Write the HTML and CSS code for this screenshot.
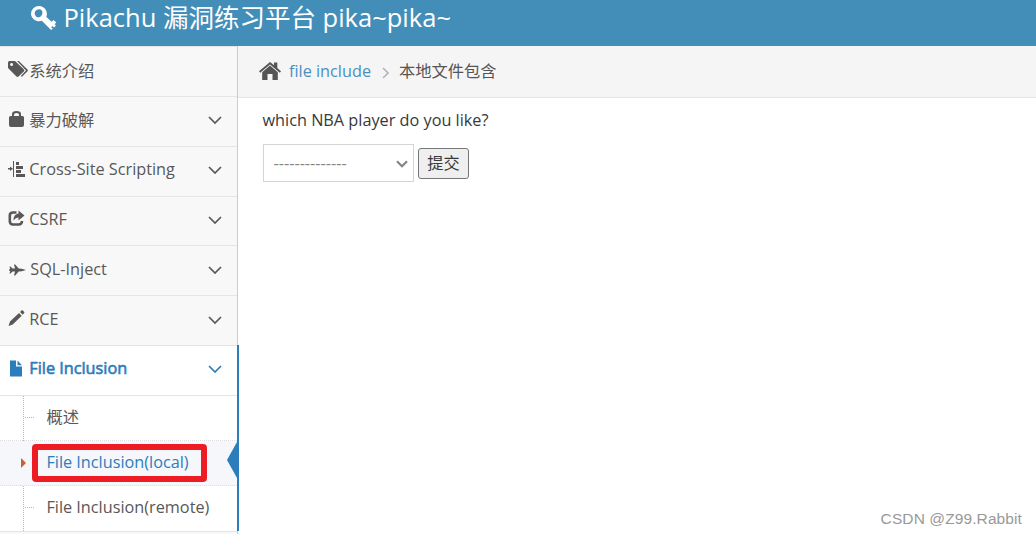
FILE: index.html
```html
<!DOCTYPE html>
<html lang="zh">
<head>
    <meta charset="UTF-8">
    <title>Get the pikachu</title>
    <link rel="stylesheet" href="styles.css">
</head>
<body>
    <header class="navbar">
        <svg class="key" viewBox="0 0 26 24"><path fill-rule="evenodd" d="M8 0a8 8 0 0 1 7.300 11l9.700 8.500-2 2-1.800-1.500-1 1.300 1.600 1.500-1.700 1.200L10.800 14.700A8 7.500 0 0 1 0 8 8 8 0 0 1 8 0zM8.500 3.200C5 3 3 6 4 8.700c1 3 5 3.500 6.500.8C12.300 7 11.500 3.500 8.500 3.200z"/><path d="M19 17.500l3.500-3.500 2.800 2.500-3.300 3.500z"/></svg>
        <span>Pikachu 漏洞练习平台 pika~pika~</span>
    </header>

    <div class="main">
        <nav class="sidebar">
            <ul class="nav-list">
                <li><a href="#">
                    <svg class="icon tags" viewBox="0 0 20 17"><path fill-rule="evenodd" d="M0 1.500Q0 0 1.500 0H7l9 8.500q.8 1-.2 2L10.500 15.500q-1 .8-2 0L0 7zM3.500 2a1.500 1.500 0 1 0 .1 3 1.500 1.500 0 0 0-.1-3z"/><path d="M9 0h1.800l8.700 8.500q.8 1-.2 2L14 15.800l-1.200-.8 5.200-5.500z"/></svg><span>系统介绍</span>
                </a></li>
                <li><a href="#">
                    <svg class="icon" viewBox="0 0 16 17"><path fill-rule="evenodd" d="M3.500 5V3Q3.500 0 8 0t4.500 3v2H14q1.500 0 1.500 1.500V14q0 2-2 2h-11q-2 0-2-2V6.500Q.5 5 2 5zm2 0h5V3.500Q10.500 2 8 2T5.500 3.500z"/></svg><span>暴力破解</span>
                    <svg class="arrow" viewBox="0 0 14 8"><path d="M1 1l6 6 6-6"/></svg>
                </a></li>
                <li><a href="#">
                    <svg class="icon" viewBox="0 0 17 17"><path d="M0 7h2V5.500L5 7.700 2 10V8.400H0zM5 0h1v16H5zM8 1h3v3H8zM8 5h7v3H8zM8 9h5v3H8zM8 13h9v3H8z"/></svg><span>Cross-Site Scripting</span>
                    <svg class="arrow" viewBox="0 0 14 8"><path d="M1 1l6 6 6-6"/></svg>
                </a></li>
                <li><a href="#">
                    <svg class="icon" viewBox="0 0 17 17"><path d="M8.500 2.500H5Q1.800 2.500 1.800 5.500v5.500Q1.800 14.500 5 14.500h5.500q3.500 0 3.500-3.500" fill="none" stroke="currentColor" stroke-width="2.600"/><path d="M10.500.5l6 5-6 5V7.500Q7.500 7.500 5.500 10.500 5.500 4 10.500 3.500z"/></svg><span>CSRF</span>
                    <svg class="arrow" viewBox="0 0 14 8"><path d="M1 1l6 6 6-6"/></svg>
                </a></li>
                <li><a href="#">
                    <svg class="icon plane" viewBox="0 0 17 12"><path d="M.5 2.500h1l2 2H6L5 .5h1.200l3.500 4 3 .3L17 6l-4.300 1.200-3 .3-3.500 4H5l1-4H3.500l-2 2h-1L1.200 7 0 6.500v-1L1.200 5z"/></svg><span>SQL-Inject</span>
                    <svg class="arrow" viewBox="0 0 14 8"><path d="M1 1l6 6 6-6"/></svg>
                </a></li>
                <li><a href="#">
                    <svg class="icon" viewBox="0 0 17 17"><path d="M.5 16L2 11.500l9-8.500 2.700 2.700L4.700 14.500zM12 2L14 0q1.500.5 2.500 2.500L14.700 4.700z"/></svg><span>RCE</span>
                    <svg class="arrow" viewBox="0 0 14 8"><path d="M1 1l6 6 6-6"/></svg>
                </a></li>
                <li class="active open">
                    <a href="#">
                        <svg class="icon" viewBox="0 0 17 17"><path d="M2 .5h6v6h6v10H2zM9.500.5l4.500 4.700H9.500z"/></svg><span>File Inclusion</span>
                        <svg class="arrow" viewBox="0 0 14 8"><path d="M1 1l6 6 6-6"/></svg>
                    </a>
                    <ul class="submenu">
                        <li><a href="#">概述</a></li>
                        <li class="current"><a href="#">File Inclusion(local)</a></li>
                        <li><a href="#">File Inclusion(remote)</a></li>
                    </ul>
                </li>
            </ul>
        </nav>

        <div class="content">
            <div class="breadcrumbs">
                <svg class="home" viewBox="0 0 22 18"><path d="M11 0l4 3.300V.5h3.300v5.600L22 9.300l-1.200 1.500L11 2.600 1.200 10.800 0 9.300z"/><path d="M11 3.600l7.800 6.700V18h-5.300v-6h-5v6H3.200v-7.700z"/></svg>
                <a href="#">file include</a>
                <svg class="sep" viewBox="0 0 7 12"><path d="M1 1l5 5-5 5"/></svg>
                <span>本地文件包含</span>
            </div>
            <div class="page">
                <p>which NBA player do you like?</p>
                <form>
                    <div class="select">
                        <span>--------------</span>
                        <svg viewBox="0 0 12 8"><path d="M1 1.200l5 5 5-5"/></svg>
                    </div>
                    <button type="button">提交</button>
                </form>
            </div>
        </div>
    </div>
    <div class="watermark">CSDN @Z99.Rabbit</div>
</body>
</html>
```
FILE: styles.css
```css
*,
*::before,
*::after {
    box-sizing: border-box;
}

body {
    margin: 0;
    height: 534px;
    overflow: hidden;
    background: #fff;
    color: #393939;
    font-family: "Open Sans", "Noto Sans CJK SC", sans-serif;
    font-size: 16.25px;
}

a {
    color: inherit;
    text-decoration: none;
}

ul {
    list-style: none;
    margin: 0;
    padding: 0;
}

svg {
    fill: currentColor;
    flex: none;
}

.navbar {
    display: flex;
    align-items: center;
    height: 46px;
    padding: 0 0 11px 31px;
    background: #438eb9;
    color: #fff;
    font-size: 25.5px;
    white-space: nowrap;
}

.navbar span {
    margin-top: -4px;
}

.key {
    width: 26px;
    height: 24px;
    margin-right: 6.5px;
}

.main {
    display: flex;
    height: 488px;
}

/* sidebar */
.sidebar {
    width: 238px;
    background: #f8f8f8;
    border-right: 1px solid #ccc;
    color: #585858;
}

.nav-list {
    border-top: 1px solid #e5e5e5;
    padding-top: 0.2px;
}

.nav-list > li > a {
    display: flex;
    align-items: center;
    height: 49.8px;
    padding: 0 15px 4px 8px;
    border-bottom: 1px solid #e5e5e5;
}

.icon {
    width: 17px;
    height: 17px;
    margin-right: 4.3px;
}

.tags {
    width: 20px;
    margin-right: 1.3px;
}

.plane {
    height: 12px;
    margin-top: 3px;
    margin-left: 1px;
}

.arrow {
    width: 14px;
    height: 8px;
    margin-left: auto;
    margin-top: 2px;
}

.arrow path,
.sep path,
.select path {
    fill: none;
    stroke: currentColor;
    stroke-width: 1.7;
}

.active {
    position: relative;
    background: #fff;
}

.active > a {
    color: #2b7dbc;
    -webkit-text-stroke: 0.6px #2b7dbc;
}

.active::after {
    content: "";
    position: absolute;
    top: -1px;
    bottom: 0.5px;
    right: -2px;
    width: 2px;
    background: #2b7dbc;
}

.submenu {
    position: relative;
}

.submenu::before {
    content: "";
    position: absolute;
    top: 0;
    bottom: 1px;
    left: 23px;
    border-left: 1px dotted #9dbdd6;
}

.submenu li {
    position: relative;
    height: 45.25px;
    border-bottom: 1px dotted #ddd;
}

.submenu li:last-child {
    border-bottom: 1px solid #e5e5e5;
}

.submenu a {
    display: flex;
    align-items: center;
    height: 100%;
    padding: 0 0 2px 46.4px;
}

.submenu li:first-child a {
    padding-bottom: 4px;
}

.submenu li::before {
    content: "";
    position: absolute;
    top: 21px;
    left: 25px;
    width: 9px;
    border-top: 1px dotted #9dbdd6;
}

.submenu .current {
    background: #f5f7fb;
    color: #2b7dbc;
}

.submenu .current::before {
    top: 17px;
    left: 21px;
    width: 0;
    border: solid transparent;
    border-width: 5px 0 5px 5px;
    border-left-color: #c86139;
}

.submenu .current::after {
    content: "";
    position: absolute;
    top: 1px;
    right: 0;
    border: solid transparent;
    border-width: 18px 10px 18px 0;
    border-right-color: #2b7dbc;
}

/* red frame round the current entry */
.current a::after {
    content: "";
    position: absolute;
    top: 3px;
    left: 32px;
    width: 175px;
    height: 38px;
    border: 6px solid #ed1c24;
    border-radius: 4px;
}

/* content */
.content {
    flex: 1;
}

.breadcrumbs {
    display: flex;
    align-items: center;
    height: 52px;
    padding: 0 0 1px 21px;
    background: #f5f5f5;
    border-bottom: 1px solid #e5e5e5;
    color: #555;
}

.breadcrumbs a {
    margin-left: 8px;
    color: #4c8fbd;
}

.breadcrumbs span {
    margin-top: -2px;
}

.home {
    width: 22px;
    height: 18px;
}

.sep {
    width: 7px;
    height: 12px;
    margin: 3px 10px 0 11px;
    color: #b2b6bf;
}

.page {
    padding: 10px 25px;
}

.page p {
    margin: 0 0 0 -0.5px;
    line-height: 24px;
}

form {
    display: flex;
    align-items: center;
    gap: 4px;
    margin-top: 12px;
}

.select {
    display: flex;
    align-items: center;
    justify-content: space-between;
    width: 151px;
    height: 38px;
    padding: 0 5px 0 9.5px;
    border: 1px solid #d5d5d5;
    color: #858585;
}

.select svg {
    width: 12px;
    height: 8px;
    margin-top: 2px;
}

.select path {
    stroke-width: 2.2;
}

button {
    width: 51px;
    height: 31px;
    padding: 0;
    border: 1px solid #767676;
    border-radius: 3px;
    background: #efefef;
    color: #393939;
    font: inherit;
    line-height: 28px;
}

.watermark {
    position: absolute;
    right: 14px;
    bottom: 4px;
    color: #999;
    font-family: "Liberation Sans", sans-serif;
    font-size: 15.5px;
    letter-spacing: 0.1px;
    line-height: 22px;
}
```
